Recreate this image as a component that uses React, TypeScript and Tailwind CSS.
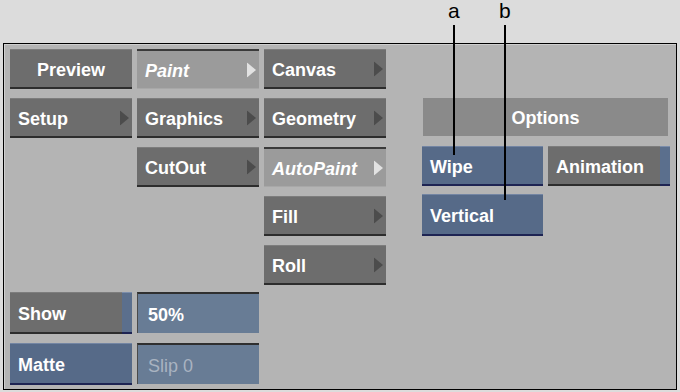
import React from "react";

type Kind = "gray" | "sel" | "blue";

const Arrow: React.FC<{ light?: boolean }> = ({ light }) => (
  <svg width="9" height="15" viewBox="0 0 9 15" className="absolute right-[3px] top-1/2 -translate-y-1/2">
    <polygon points="0,0 9,7.5 0,15" fill={light ? "#e2e2e2" : "#4c4c4c"} />
  </svg>
);

const Btn: React.FC<{
  label: string;
  kind?: Kind;
  arrow?: boolean;
  italic?: boolean;
  center?: boolean;
  strip?: boolean;
  className?: string;
}> = ({ label, kind = "gray", arrow, italic, center, strip, className = "" }) => {
  const skin =
    kind === "sel"
      ? "bg-[#9b9b9b] border-t-2 border-t-[#3a3a3a] border-b border-b-[#a8a8a8]"
      : kind === "blue"
      ? "bg-[#566a88] border-t border-t-[#7385a3] border-b-2 border-b-[#1e2453]"
      : "bg-[#6d6d6d] border-t border-t-[#7d7d7d] border-b-2 border-b-[#2d2d2d]";
  return (
    <div className={`relative flex h-[40px] ${className}`}>
      <div
        className={`relative flex flex-1 items-center pt-[2px] ${skin} ${center ? "justify-center" : "pl-[8px]"}`}
      >
        <span
          className={`text-[18px] font-bold leading-none text-white ${italic ? "italic" : ""}`}
          style={{ fontFamily: '"Liberation Sans", Arial, sans-serif' }}
        >
          {label}
        </span>
        {arrow && <Arrow light={kind === "sel"} />}
      </div>
      {strip && (
        <div className="w-[10px] bg-[#5b6f8d] border-t border-t-[#7b8dab] border-b-2 border-b-[#1e2453]" />
      )}
    </div>
  );
};

const Field: React.FC<{ label: string; dim?: boolean }> = ({ label, dim }) => (
  <div className="flex h-[41px] items-center bg-[#687c95] pl-[10px] pt-[2px] border-t-2 border-t-[#2f2f2f] border-l border-l-[#4a4a4a]">
    <span
      className={`text-[18px] leading-none ${dim ? "font-normal text-[#a9b3c1]" : "font-bold text-white"}`}
      style={{ fontFamily: '"Liberation Sans", Arial, sans-serif' }}
    >
      {label}
    </span>
  </div>
);

export default function App() {
  return (
    <div className="relative h-[392px] w-[680px] bg-[#dcdcdc] pt-[43px] pl-[3px] pr-[3px]">
      {/* callout labels */}
      <div
        className="absolute left-[448px] top-[0px] text-[21px] leading-[21px] text-black"
        style={{ fontFamily: '"Liberation Sans", Arial, sans-serif' }}
      >
        a
      </div>
      <div
        className="absolute left-[499px] top-[0px] text-[21px] leading-[21px] text-black"
        style={{ fontFamily: '"Liberation Sans", Arial, sans-serif' }}
      >
        b
      </div>
      <div className="absolute left-[453px] top-[25px] z-10 h-[130px] w-[2px] bg-black" />
      <div className="absolute left-[504px] top-[25px] z-10 h-[175px] w-[2px] bg-black" />

      <div className="flex h-[347px] border border-black bg-[#b4b4b4] shadow-[inset_1px_1px_0_#cfcfcf]">
        {/* left menu area */}
        <div className="flex flex-col pl-[6px] pt-[5px]">
          <div className="grid grid-cols-[122px_122px_122px] auto-rows-[40px] gap-x-[5px] gap-y-[9px]">
            <Btn label="Preview" center />
            <Btn label="Paint" kind="sel" italic arrow />
            <Btn label="Canvas" arrow />

            <Btn label="Setup" arrow />
            <Btn label="Graphics" arrow />
            <Btn label="Geometry" arrow />

            <div />
            <Btn label="CutOut" arrow />
            <Btn label="AutoPaint" kind="sel" italic arrow />

            <div />
            <div />
            <Btn label="Fill" arrow />

            <div />
            <div />
            <Btn label="Roll" arrow />
          </div>

          <div className="mt-[7px] grid grid-cols-[122px_122px] gap-x-[5px] gap-y-[9px]">
            <Btn label="Show" strip className="h-[42px]" />
            <Field label="50%" />
            <Btn label="Matte" kind="blue" className="h-[42px]" />
            <Field label="Slip 0" dim />
          </div>
        </div>

        {/* options area */}
        <div className="ml-[36px] flex flex-col pt-[54px]">
          <div className="ml-[1px] flex h-[38px] w-[245px] items-center justify-center bg-[#8a8a8a] pt-[2px]">
            <span
              className="text-[18px] font-bold leading-none text-white"
              style={{ fontFamily: '"Liberation Sans", Arial, sans-serif' }}
            >
              Options
            </span>
          </div>
          <div className="mt-[10px] grid grid-cols-[121px_122px] gap-x-[5px] gap-y-[8px]">
            <Btn label="Wipe" kind="blue" />
            <Btn label="Animation" strip />
            <Btn label="Vertical" kind="blue" className="h-[42px]" />
          </div>
        </div>
      </div>
    </div>
  );
}
